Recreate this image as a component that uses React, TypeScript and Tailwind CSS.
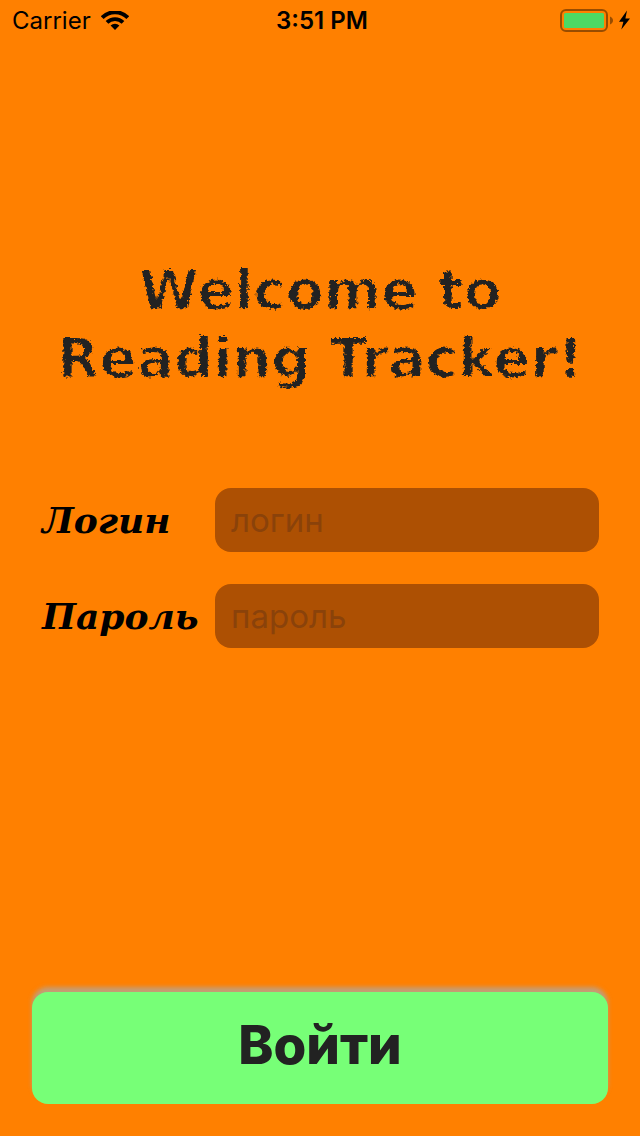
import React from "react";

function StatusBar() {
  return (
    <header className="grid h-10 shrink-0 grid-cols-3 items-center pl-3 pr-2 font-['Inter',sans-serif] text-2xl text-black">
      <div className="flex items-center gap-2.5 pt-0.5">
        <span>Carrier</span>
        <svg viewBox="0 0 28 20" className="h-5 w-7" fill="none" aria-label="Wi-Fi">
          <path d="M1.2 6.6 A18 18 0 0 1 26.8 6.6" stroke="currentColor" strokeWidth="4" />
          <path d="M6 11.4 A11.3 11.3 0 0 1 22 11.4" stroke="currentColor" strokeWidth="3.8" />
          <path d="M14 19 L9.6 14.6 A6.2 6.2 0 0 1 18.4 14.6 Z" fill="currentColor" />
        </svg>
      </div>
      <span className="pt-0.5 text-center font-semibold whitespace-nowrap">3:51 PM</span>
      <svg viewBox="0 0 72 24" className="h-6 w-18 justify-self-end" fill="none" aria-label="Battery charging">
        <rect x="1" y="2" width="46" height="21" rx="5" stroke="#984c00" strokeWidth="2" />
        <rect x="4" y="5" width="40" height="15" rx="1.5" fill="#4cd964" />
        <path d="M50 8.5 C54 10 54 15 50 16.500 Z" fill="#984c00" />
        <path d="M67 2.500 L59 13.700 H63.400 L61.300 21.500 L70 10.500 H65.400 Z" fill="#000" />
      </svg>
    </header>
  );
}

function ChalkFilter() {
  return (
    <svg className="absolute size-0" aria-hidden="true">
      <filter id="chalk" x="-2%" y="-5%" width="104%" height="110%">
        <feMorphology in="SourceGraphic" operator="erode" radius="1" result="thin" />
        <feTurbulence type="fractalNoise" baseFrequency="0.35" numOctaves="2" seed="4" result="noise" />
        <feDisplacementMap in="thin" in2="noise" scale="6" xChannelSelector="R" yChannelSelector="G" />
      </filter>
    </svg>
  );
}

type FieldProps = { id: string; label: string; placeholder: string; type: string };

function Field({ id, label, placeholder, type }: FieldProps) {
  return (
    <>
      <label htmlFor={id} className="pl-px font-[Georgia,'DejaVu_Serif',serif] text-4xl font-bold italic text-black">
        {label}
      </label>
      <input
        id={id}
        type={type}
        placeholder={placeholder}
        className="h-16 w-full min-w-0 rounded-2xl bg-[#ad5003] px-4 font-['Inter',sans-serif] text-[33px] text-[#222] outline-none placeholder:text-[#8a420a]"
      />
    </>
  );
}

export default function App() {
  return (
    <main className="flex min-h-screen flex-col bg-[#ff8000]">
      <StatusBar />
      <ChalkFilter />
      <h1 className="mt-54 text-center font-['Chalkduster','DejaVu_Sans',sans-serif] text-[55px] font-bold leading-[68px] text-[#222] [filter:url(#chalk)]">
        Welcome to
        <br />
        Reading Tracker!
      </h1>
      <form className="mt-24 flex grow flex-col justify-between">
        <div className="grid grid-cols-[158px_1fr] items-center gap-x-4 gap-y-8 px-[41px]">
          <Field id="login" label="Логин" placeholder="логин" type="text" />
          <Field id="password" label="Пароль" placeholder="пароль" type="password" />
        </div>
        <button
          type="submit"
          className="mx-8 mb-8 h-28 rounded-2xl bg-[#77ff77] pb-1 font-['Inter',sans-serif] text-[53px] font-extrabold text-[#222] shadow-[0_-5px_4px_rgba(170,170,170,0.7)]"
        >
          Войти
        </button>
      </form>
    </main>
  );
}
